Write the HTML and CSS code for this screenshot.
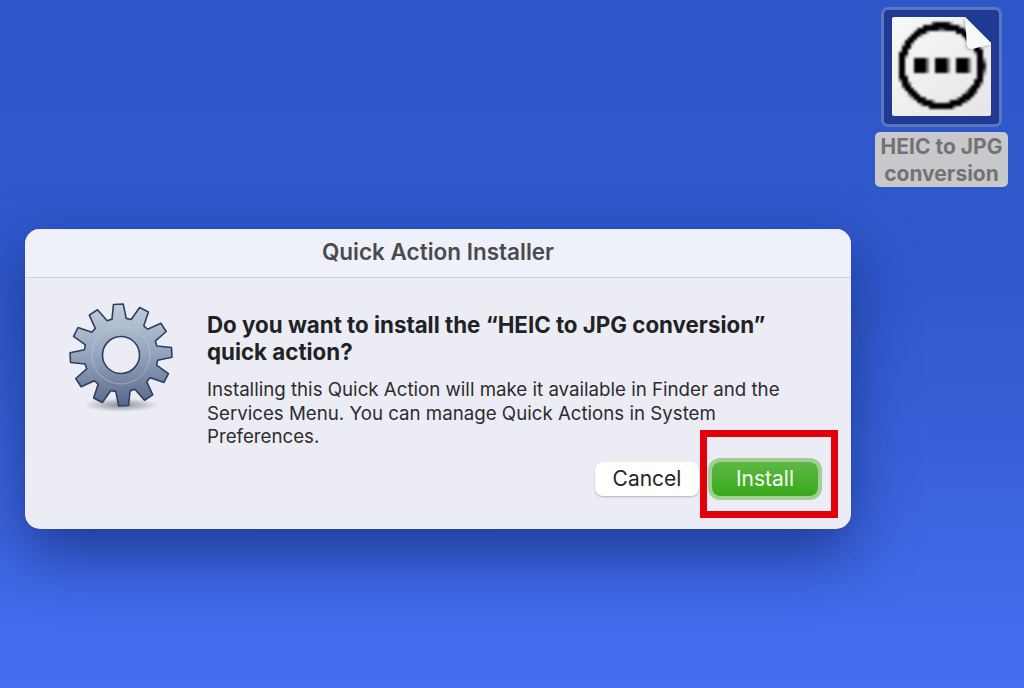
FILE: index.html
```html
<!DOCTYPE html>
<html lang="en">
<head>
<meta charset="utf-8">
<title>Quick Action Installer</title>
<link rel="stylesheet" href="styles.css">
</head>
<body>
<main class="desktop">
  <div class="file">
    <div class="file-icon">
      <svg class="file-svg" viewBox="0 0 121 120" width="121" height="120" aria-hidden="true">
        <defs>
          <linearGradient id="page" x1="0" y1="0" x2="1" y2="1">
            <stop offset="0" stop-color="#f8f8f8"/><stop offset="1" stop-color="#e6e6e6"/>
          </linearGradient>
          <filter id="pix" filterUnits="userSpaceOnUse" x="0" y="0" width="121" height="120" color-interpolation-filters="sRGB">
            <feFlood x="1" y="1" width="1" height="1"/>
            <feComposite width="3" height="3"/>
            <feTile result="grid"/>
            <feComposite in="SourceGraphic" in2="grid" operator="in"/>
            <feMorphology operator="dilate" radius="1"/>
            <feGaussianBlur stdDeviation="0.9"/>
          </filter>
          <filter id="foldshade" x="-30%" y="-30%" width="160%" height="160%"><feDropShadow dx="-1" dy="1" stdDeviation="1.5" flood-color="#000" flood-opacity=".3"/></filter>
        </defs>
        <path d="M13 10H84L110 36V107Q110 109 108 109H13Q11 109 11 107V12Q11 10 13 10Z" fill="url(#page)"/>
        <g filter="url(#pix)">
          <circle cx="60.5" cy="59" r="40" fill="none" stroke="#000" stroke-width="7"/>
          <rect x="32.5" y="51.5" width="14" height="14" fill="#000"/>
          <rect x="53.5" y="51.5" width="14" height="14" fill="#000"/>
          <rect x="74.5" y="51.5" width="14" height="14" fill="#000"/>
        </g>
        <path d="M84 10L110 36Q110 38 107 38L91 42Q87 42 86 38Z" fill="#f9f9f9" filter="url(#foldshade)"/>
      </svg>
    </div>
    <div class="file-label">HEIC to JPG conversion</div>
  </div>

  <section class="dialog">
    <header class="dialog-title">Quick Action Installer</header>
    <div class="dialog-main">
      <div class="gear">
        <svg viewBox="-55 -55 110 118" width="110" height="118" aria-hidden="true">
          <defs>
            <linearGradient id="steel" gradientUnits="userSpaceOnUse" x1="0" y1="-52" x2="0" y2="52">
              <stop offset="0" stop-color="#c3cede"/><stop offset=".5" stop-color="#95a4bd"/><stop offset="1" stop-color="#55678a"/>
            </linearGradient>
            <radialGradient id="floor"><stop offset="0" stop-color="#6a6f78" stop-opacity=".75"/><stop offset="1" stop-color="#6a6f78" stop-opacity="0"/></radialGradient>
          </defs>
          <ellipse cx="0" cy="50" rx="38" ry="7" fill="url(#floor)"/>
          <g transform="rotate(-3)">
            <path fill="url(#steel)" fill-rule="evenodd" stroke="#2d3f60" stroke-width="1.6" stroke-linejoin="round"
              d="M-7.1-36.3L-4.9-50.8L4.9-50.8L7.1-36.3L12-35L21.1-46.4L29.6-41.5L24.3-27.9L27.9-24.3L41.5-29.6L46.4-21.1L35-12L36.3-7.1L50.8-4.9L50.8 4.9L36.3 7.1L35 12L46.4 21.1L41.5 29.6L27.9 24.3L24.3 27.9L29.6 41.5L21.1 46.4L12 35L7.1 36.3L4.9 50.8L-4.9 50.8L-7.1 36.3L-12 35L-21.1 46.4L-29.6 41.5L-24.3 27.9L-27.9 24.3L-41.5 29.6L-46.4 21.1L-35 12L-36.3 7.1L-50.8 4.9L-50.8-4.9L-36.3-7.1L-35-12L-46.4-21.1L-41.5-29.6L-27.9-24.3L-24.3-27.9L-29.6-41.5L-21.1-46.4L-12-35ZM18.5 0A18.5 18.5 0 1 0-18.5 0A18.5 18.5 0 1 0 18.5 0Z"/>
          </g>
          <circle cx="0" cy="0" r="29" fill="none" stroke="#c7d0de" stroke-opacity=".5" stroke-width="1"/>
        </svg>
      </div>
      <div class="dialog-copy">
        <h1 class="dialog-heading">Do you want to install the “HEIC to JPG conversion” quick action?</h1>
        <p class="dialog-text">Installing this Quick Action will make it available in Finder and the Services Menu. You can manage Quick Actions in System Preferences.</p>
        <div class="dialog-actions">
          <button class="btn btn-cancel" type="button">Cancel</button>
          <button class="btn btn-install" type="button">Install</button>
        </div>
      </div>
    </div>
    <div class="highlight"></div>
  </section>
</main>
</body>
</html>
```

FILE: styles.css
```css
* { box-sizing: border-box; }
html, body { margin: 0; height: 100%; }
body { overflow: hidden; font-family: Inter, "Liberation Sans", sans-serif; }

.desktop {
  position: relative;
  width: 1024px;
  height: 688px;
  overflow: hidden;
  background: linear-gradient(180deg, #2d56c8 0%, #3059cd 40%, #3a63dc 70%, #446ff1 100%);
}

.file {
  position: absolute;
  left: 875px;
  top: 7px;
  width: 133px;
  display: flex;
  flex-direction: column;
  align-items: center;
  gap: 5px;
}
.file-icon {
  width: 121px;
  height: 120px;
  border: 3px solid #5b76be;
  border-radius: 7px;
  background: #1f3a94;
  position: relative;
}
.file-svg { display: block; margin: -3px; }
.file-label {
  width: 133px;
  height: 55px;
  padding: 1px 0 0;
  border-radius: 5px;
  background: #c8c9cc;
  color: #737373;
  font-size: 21px;
  font-weight: 700;
  line-height: 27px;
  text-align: center;
}

.dialog {
  position: absolute;
  left: 25px;
  top: 229px;
  width: 826px;
  height: 300px;
  border-radius: 15px;
  background: #ecedf4;
  box-shadow: 0 25px 60px rgba(10, 25, 90, .55), 0 0 1px rgba(10, 25, 90, .5);
}
.dialog-title {
  height: 49px;
  padding-top: 9px;
  border-bottom: 1px solid #cfd1d9;
  border-radius: 15px 15px 0 0;
  background: #eef1fa;
  color: #4a4a4c;
  font-size: 22.5px;
  font-weight: 600;
  line-height: 28px;
  text-align: center;
}
.dialog-main { display: flex; }
.gear { width: 182px; padding: 22px 0 0 41px; flex: none; }
.gear svg { display: block; }
.dialog-copy { width: 600px; padding-top: 33px; }
.dialog-heading {
  margin: 0;
  color: #222224;
  font-size: 22.3px;
  font-weight: 700;
  line-height: 27px;
}
.dialog-text {
  margin: 13px 0 0;
  color: #2c2c2e;
  font-size: 18.7px;
  line-height: 23.7px;
}
.dialog-actions {
  display: flex;
  justify-content: flex-end;
  gap: 13px;
  width: 611px;
  margin-top: 13px;
}
.btn {
  height: 34px;
  border: 0;
  border-radius: 8px;
  font-family: inherit;
  font-size: 21px;
  line-height: 34px;
  padding: 0;
}
.btn-cancel {
  width: 104px;
  background: #fff;
  color: #262626;
  box-shadow: 0 1px 2px rgba(0, 0, 0, .25);
}
.btn-install {
  width: 106px;
  background: linear-gradient(180deg, #5eb845, #38a81a);
  color: #f4fbf0;
  box-shadow: 0 0 0 4px #a3cf97;
}

.highlight {
  position: absolute;
  left: 675px;
  top: 201px;
  width: 138px;
  height: 88px;
  border: 7px solid #e2000b;
}
```
